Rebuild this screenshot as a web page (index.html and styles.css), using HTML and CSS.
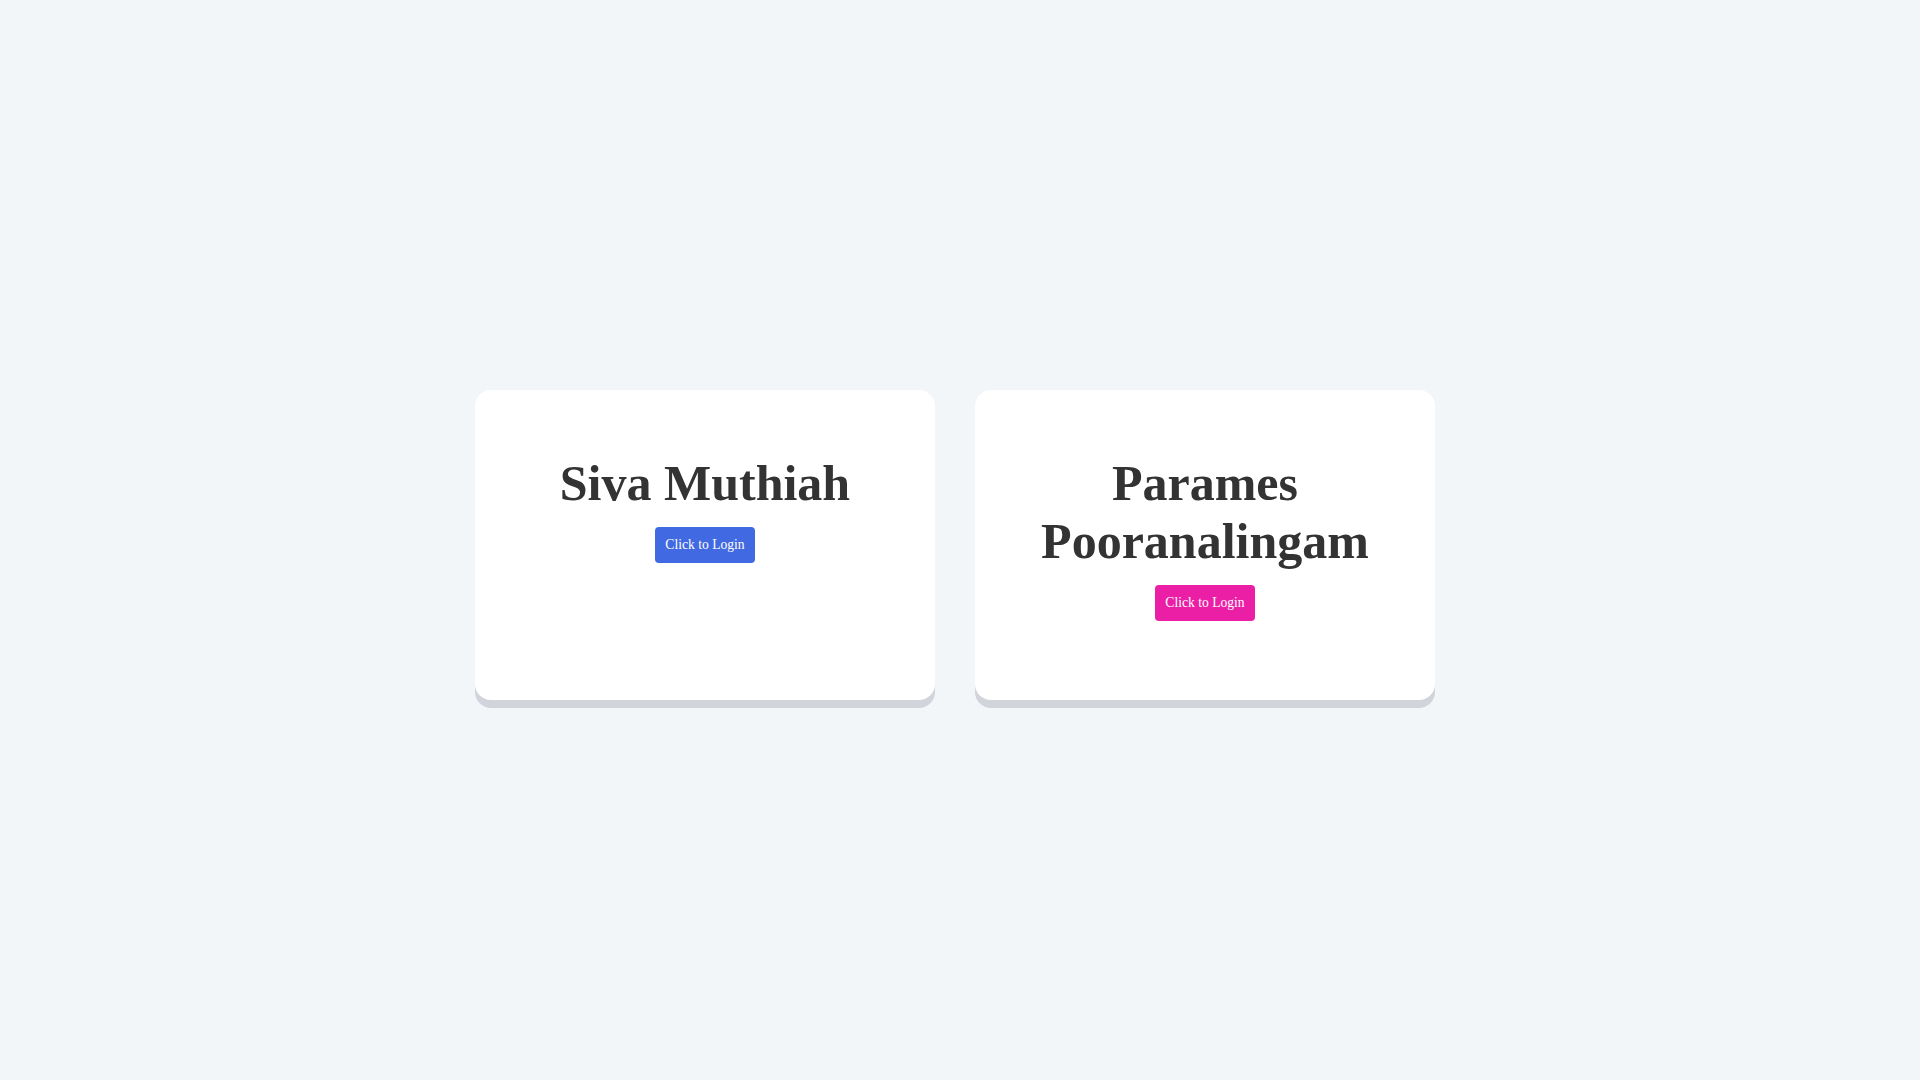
FILE: index.html
```html
<!DOCTYPE html>
<html lang="en">

<head>
  <meta charset="UTF-8">
  <meta name="viewport" content="width=device-width, initial-scale=1.0">
  <title>Login</title>
  <link rel="stylesheet" href="styles.css">
</head>

<body>
  <div class="wrapper">
    <div class="card">
      <h1>Siva Muthiah</h1>
      <button class="btn btn-blue">Click to Login</button>
    </div>
    <div class="card">
      <h1>Parames Pooranalingam</h1>
      <button class="btn btn-pink">Click to Login</button>
    </div>
  </div>
</body>

</html>
```

FILE: styles.css
```css
* {
	margin: 0;
	padding: 0;
	box-sizing: border-box;
}

body {
	background: #f3f6f9;
	font-family: "Liberation Serif", "Times New Roman", serif;
	color: #333;
}

.wrapper {
	height: 100vh;
	display: flex;
	justify-content: center;
	align-items: center;
	gap: 40px;
	padding: 10px 10px 0 0;
}

.card {
	width: 460px;
	height: 310px;
	background: #fff;
	border-radius: 16px;
	box-shadow: 0 8px 0 #d1d5db;
	padding: 64px 20px 0;
	text-align: center;
}

.card h1 {
	font-size: 50px;
	font-weight: bold;
	line-height: normal;
	margin-bottom: 15px;
}

.btn {
	display: inline-block;
	border: 0;
	outline: none;
	border-radius: 4px;
	padding: 10px 10px;
	font-family: inherit;
	font-size: 13.6px;
	color: #fff;
	cursor: pointer;
}

.btn-blue {
	background: #4169e1;
}

.btn-pink {
	background: #ea1fa6;
}
```
